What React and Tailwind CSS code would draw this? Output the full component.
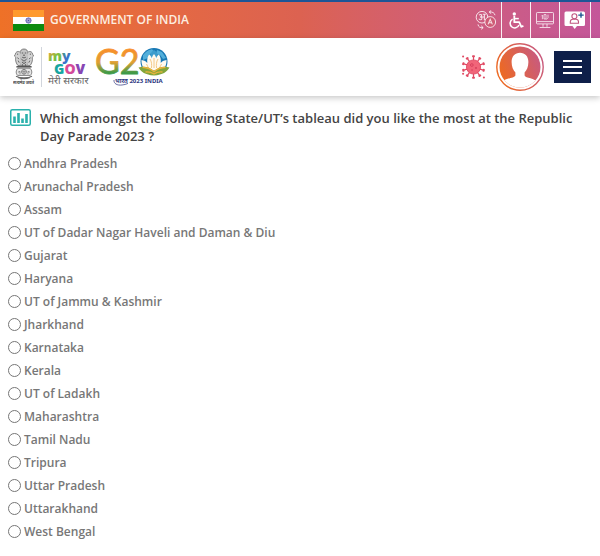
import React, { useState } from 'react';

const STATES = [
  'Andhra Pradesh',
  'Arunachal Pradesh',
  'Assam',
  'UT of Dadar Nagar Haveli and Daman & Diu',
  'Gujarat',
  'Haryana',
  'UT of Jammu & Kashmir',
  'Jharkhand',
  'Karnataka',
  'Kerala',
  'UT of Ladakh',
  'Maharashtra',
  'Tamil Nadu',
  'Tripura',
  'Uttar Pradesh',
  'Uttarakhand',
  'West Bengal',
];

const IndiaFlag = () => (
  <svg width="31" height="21" viewBox="0 0 31 21" aria-hidden="true">
    <rect width="31" height="7" fill="#ff9a2e" />
    <rect y="7" width="31" height="7" fill="#fff" />
    <rect y="14" width="31" height="7" fill="#0c8a10" />
    <circle cx="15.5" cy="10.5" r="2.6" fill="#dfe0f4" stroke="#3a3a9c" strokeWidth="0.8" />
    <path d="M15.5 8v5M13 10.5h5M13.8 8.8l3.4 3.4M17.2 8.8l-3.4 3.4" stroke="#3a3a9c" strokeWidth="0.4" />
  </svg>
);

const LanguageIcon = () => (
  <svg width="22" height="20" viewBox="0 0 22 20" fill="none" stroke="#fff" strokeOpacity="0.8" aria-hidden="true">
    <circle cx="7" cy="7.2" r="5.8" />
    <circle cx="15.2" cy="12" r="5.4" fill="#cf5b75" />
    <path d="M4 5.2c1.400-1.200 3-.6 2.600.8-.2.800-1 1-1.600 1 1.200 0 2.200.6 1.800 1.800-.4 1.200-2.200 1.200-3 0M6.800 7h2.600M9.400 4.200v5.800M7.800 4.200h3" strokeWidth="1.100" />
    <path d="M13 14.400l2.200-5 2.200 5M13.800 12.800h2.800" strokeWidth="1.100" />
    <path d="M20 5.200C19.400 2.800 17.500 1.700 14.400 2M16.200 0.400L14.200 2l2 1.700" />
    <path d="M3 14.400c.2 2.600 2.400 3.600 5 3.200M6.200 15.800l2 1.800-2 1.700" />
  </svg>
);

const WheelchairIcon = () => (
  <svg width="16" height="17" viewBox="0 0 16 17" fill="none" stroke="#fff" aria-hidden="true">
    <circle cx="6.3" cy="1.9" r="1.7" fill="#fff" stroke="none" />
    <path d="M6.3 3.8v6.4h4.9l2.2 4.6 2-.9" strokeWidth="1.8" strokeLinejoin="round" />
    <path d="M6.5 6.6h4.3" strokeWidth="1.5" />
    <path d="M4.6 7.2a4.6 4.6 0 1 0 6.4 5.8" strokeWidth="1.5" />
  </svg>
);

const MonitorIcon = () => (
  <svg width="18" height="17" viewBox="0 0 18 17" fill="none" stroke="#fff" strokeOpacity="0.75" aria-hidden="true">
    <rect x="0.5" y="0.5" width="17" height="11.4" rx="0.8" />
    <path d="M1 9.6h16M7 12v2.8M11 12v2.8M3.6 15.5h10.8" />
    <path d="M5.400 4.200l1-1v4M8 2.600h2v4.400H8zM12 2.600v3l-1.600 2" strokeWidth="0.9" />
  </svg>
);

const RegisterIcon = () => (
  <svg width="22" height="19" viewBox="0 0 22 19" aria-hidden="true">
    <path d="M2 0.5h17.5a1.5 1.5 0 0 1 1.5 1.5v11.5a1.5 1.5 0 0 1-1.5 1.5H13l-2.3 3-2.3-3H2a1.5 1.5 0 0 1-1.5-1.5V2A1.5 1.5 0 0 1 2 .5z" fill="#fff" />
    <g fill="none" stroke="#c0557f" strokeWidth="1.1">
      <circle cx="10.4" cy="5.2" r="2.5" />
      <path d="M6.3 12.2V10.6a2.6 2.6 0 0 1 2.6-2.4h3a2.6 2.6 0 0 1 2.6 2.4v1.6z" />
    </g>
    <path d="M17 1.400v5.400M14.300 4.100h5.400" stroke="#1d5590" strokeWidth="1.400" />
  </svg>
);

const Emblem = () => (
  <svg width="22" height="38" viewBox="0 0 22 38" fill="none" stroke="#666" strokeWidth="0.8" aria-hidden="true">
    <path d="M7 5.2C7 2.6 8.6 1 11 1s4 1.6 4 4.2c1.2 1.4 1 3.4.2 4.8.6 2.200.4 5.200-.6 7.600H7.400C6.400 15.200 6.200 12.200 6.800 10 6 8.600 5.800 6.600 7 5.200z" fill="#c4c4c4" />
    <path d="M6.8 4C4.600 2.800 2.600 4 2.400 6.200L1.400 8l1.400 1.400C2 12.600 3.400 15.800 5 17.600h2.400" fill="#d4d4d4" />
    <path d="M15.200 4c2.200-1.200 4.200 0 4.400 2.200L20.600 8l-1.400 1.400c.8 3.200-.6 6.400-2.200 8.200h-2.400" fill="#d4d4d4" />
    <path d="M8.800 5h1.400M11.800 5h1.400M10 7.200h2M9.200 9.200c1.200.8 2.400.8 3.600 0M8.400 11.200l2.600 2 2.600-2M9 14l2 1.600L13 14M9.400 16.200v1.400M12.600 16.200v1.400M4 6.200h1.200M16.800 6.200H18M4.600 9.600l1.200 1.600M17.400 9.600l-1.200 1.600M5.200 12.600l1 2M16.800 12.600l-1 2" stroke="#444" />
    <path d="M3.400 18.800h15.200" strokeWidth="1.400" stroke="#444" />
    <path d="M5 20.200c-2.200 2.200-2.400 5.200-.4 7.200h12.800c2-2 1.800-5-.4-7.200z" fill="#e6e6e6" />
    <circle cx="11" cy="23.800" r="2.400" fill="#f4f4f4" />
    <path d="M11 21.400v4.800M8.600 23.800h4.800M5 24.200l2-.8v3M17 24.200l-2-.8v3" strokeWidth="0.700" />
    <path d="M3 28.200c4 2.200 12 2.200 16 0M5 29.600c3.600 1.400 8.400 1.400 12 0" strokeWidth="1.100" />
    <text x="0" y="36" fontSize="4" fontWeight="700" fill="#444" stroke="none" fontFamily="Noto Sans, sans-serif">सत्यमेव जयते</text>
  </svg>
);

const MyGovLogo = () => (
  <svg className="overflow-visible" width="42" height="38" viewBox="0 0 42 38" role="img" aria-label="myGov">
    <defs>
      <linearGradient id="m" x1="0" y1="0" x2="1" y2="1">
        <stop offset="0.15" stopColor="#f0a038" />
        <stop offset="0.45" stopColor="#7cc242" />
        <stop offset="1" stopColor="#3fae55" />
      </linearGradient>
      <linearGradient id="y" x1="0" y1="0" x2="1" y2="1">
        <stop offset="0.3" stopColor="#56b947" />
        <stop offset="0.7" stopColor="#3a74c8" />
      </linearGradient>
      <linearGradient id="o" x1="0" x2="1">
        <stop offset="0" stopColor="#e5518c" />
        <stop offset="1" stopColor="#c643a4" />
      </linearGradient>
    </defs>
    <g fontFamily="Open Sans, sans-serif" fontWeight="800">
      <text x="0" y="13" fontSize="14">
        <tspan fill="url(#m)">m</tspan>
        <tspan fill="url(#y)">y</tspan>
      </text>
      <text x="6" y="26" fontSize="14">
        <tspan fill="#17a6a0">G</tspan>
        <tspan fill="url(#o)">O</tspan>
        <tspan fill="#8746b4">V</tspan>
      </text>
    </g>
    <text x="0" y="36" fontSize="10" fill="#666" fontFamily="Noto Sans, sans-serif">मेरी सरकार</text>
  </svg>
);

const G20Logo = () => (
  <svg className="overflow-visible" width="76" height="40" viewBox="0 0 76 40" role="img" aria-label="G20 India">
    <defs>
      <linearGradient id="g20" x1="0" y1="0" x2="0" y2="1">
        <stop offset="0.25" stopColor="#f7902c" />
        <stop offset="0.55" stopColor="#dda032" />
        <stop offset="0.8" stopColor="#3f9a48" />
      </linearGradient>
      <clipPath id="globe">
        <circle cx="58" cy="15" r="13" />
      </clipPath>
    </defs>
    <text x="-1" y="27" fontSize="34" fill="url(#g20)" stroke="url(#g20)" strokeWidth="0.8" fontFamily="Lato, sans-serif">G2</text>
    <circle cx="58" cy="14.500" r="13.500" fill="#1878b4" />
    <g clipPath="url(#globe)">
      <path d="M47 8c3-4 6-6 9-6l2 3-4 2-2 4-5 2zM61 3l5 2 4 6-3 1-3-4-4-1z" fill="#51aeda" />
      <path d="M58 3c3 2 4.400 4.600 4 8h-8c-.4-3.400 1-6 4-8z" fill="#3c9ccc" />
    </g>
    <path d="M45.500 13c3 .4 4.600 1.400 5.800 3-.4-3.400.2-6 1.800-8.400 1.400 1 2.200 2.200 2.600 3.600.6-1.800 1.300-3 2.300-4.200 1 1.200 1.700 2.400 2.300 4.200.4-1.400 1.200-2.600 2.600-3.600 1.600 2.400 2.200 5 1.800 8.400 1.200-1.600 2.800-2.600 5.800-3 .2 4.600-1.600 8.600-4.500 10.500H50C47.100 21.600 45.300 17.600 45.500 13z" fill="#fffaf0" />
    <path d="M54 12c1.600 2.400 2 6 1.400 9M62 12c-1.600 2.400-2 6-1.400 9M58 11v10M50.500 17l2 4M65.500 17l-2 4" fill="none" stroke="#f3c47c" strokeWidth="0.900" />
    <path d="M42.500 20.500c5.500-1.600 10.500-.6 15.500 3.600 5-4.200 10-5.200 15.500-3.600-2.600 4.500-6.500 7.300-15.500 8C49 27.800 45.100 25 42.500 20.500z" fill="#82a53a" />
    <path d="M46.500 20.200c4.500.2 8.500 1.800 11.500 4.600 3-2.800 7-4.400 11.500-4.600M49.500 25c3.500-.4 5.900.2 8.500 2 2.600-1.800 5-2.400 8.500-2" fill="none" stroke="#e9b23c" strokeWidth="1.400" />
    <text x="19" y="36" fontSize="6" fontWeight="700" fill="#2c3580" fontFamily="Noto Sans, sans-serif">भारत 2023 INDIA</text>
    <path d="M18 33c-.4 3.600 3 5.600 8 5 2.400-.2 4.400-.8 6-1.600" stroke="#2c3580" strokeWidth="0.700" fill="none" />
  </svg>
);

const SPIKES = [0, 36, 72, 108, 144, 180, 216, 252, 288, 324];

const VirusIcon = () => (
  <svg width="25" height="26" viewBox="0 0 24 25" aria-hidden="true">
    <g stroke="#e04a63" fill="#e04a63">
      {SPIKES.map((angle) => (
        <g key={angle} transform={`rotate(${angle} 12 12.5)`}>
          <path d="M12 6V2.600" strokeWidth="1.200" />
          <rect x="10.600" y="1.200" width="2.800" height="2" rx="0.800" stroke="none" />
        </g>
      ))}
      <circle cx="2" cy="2.400" r="1" stroke="none" />
      <circle cx="2" cy="19" r="1" stroke="none" />
      <circle cx="22" cy="22.600" r="1" stroke="none" />
    </g>
    <circle cx="12" cy="12.500" r="6.800" fill="#f16579" stroke="#dd4560" strokeWidth="0.800" />
    <circle cx="10.400" cy="10.600" r="1.300" fill="none" stroke="#d23a58" strokeWidth="0.800" />
    <circle cx="14.400" cy="13.400" r="0.900" fill="#d23a58" />
    <circle cx="10.600" cy="15.400" r="0.700" fill="#d23a58" />
  </svg>
);

const Avatar = () => (
  <svg width="48" height="48" viewBox="0 0 48 48" aria-hidden="true">
    <defs>
      <linearGradient id="avatar" x1="0" y1="0.700" x2="1" y2="0.300">
        <stop offset="0" stopColor="#ee6a1f" />
        <stop offset="1" stopColor="#c85a80" />
      </linearGradient>
      <clipPath id="disc">
        <circle cx="24" cy="24" r="20.500" />
      </clipPath>
    </defs>
    <circle cx="24" cy="24" r="23.200" fill="none" stroke="url(#avatar)" strokeWidth="1.400" />
    <circle cx="24" cy="24" r="20.500" fill="url(#avatar)" />
    <g clipPath="url(#disc)" fill="#fff">
      <path d="M24 9.800c5 0 8.400 3.600 8.400 9.200 0 4.600-1.600 8.400-3.800 10.400v3c1 3 10.400 2.200 13.400 7.200v9H6v-9c3-5 12.400-4.200 13.400-7.200v-3c-2.200-2-3.800-5.800-3.800-10.400 0-5.600 3.400-9.200 8.400-9.200z" />
    </g>
  </svg>
);

const PollIcon = () => (
  <svg className="shrink-0" width="21" height="17" viewBox="0 0 21 17" fill="none" stroke="#2ab1ac" aria-hidden="true">
    <rect x="0.750" y="0.750" width="19.500" height="15.500" rx="1.500" strokeWidth="1.500" />
    <path d="M4.500 14V7.500M8.500 14V4M12.500 14V9.500M16.500 14V5" strokeWidth="2.600" />
  </svg>
);

const TOOLS = [
  { label: 'Change language', Icon: LanguageIcon },
  { label: 'Accessibility', Icon: WheelchairIcon },
  { label: 'Screen reader', Icon: MonitorIcon },
  { label: 'Register', Icon: RegisterIcon },
];

const App = () => {
  const [choice, setChoice] = useState('');

  return (
    <div className="min-h-screen bg-white font-['Open_Sans',sans-serif]">
      <div className="flex h-[38px] items-stretch justify-between border-t-2 border-[#1d5596] bg-linear-to-r from-[#ee7127] via-[#dc6251] to-[#c4579a] pr-[9px] pl-[13px]">
        <a href="#india" className="flex items-center gap-[6px] text-xs font-semibold text-[#fdeee0]">
          <IndiaFlag />
          GOVERNMENT OF INDIA
        </a>
        <div className="flex">
          {TOOLS.map(({ label, Icon }) => (
            <button
              key={label}
              type="button"
              aria-label={label}
              className="flex min-w-[29px] items-center justify-center border-r border-white/90 px-1"
            >
              <Icon />
            </button>
          ))}
        </div>
      </div>

      <header className="flex h-[58px] items-center justify-between pr-[9px] pl-[13px] shadow-[0_2px_6px_rgba(0,0,0,0.22)]">
        <a href="#home" className="flex items-center gap-[6px]">
          <Emblem />
          <span className="flex h-10 items-center border-l border-gray-300 pl-[6px]">
            <MyGovLogo />
          </span>
          <G20Logo />
        </a>
        <div className="flex items-center gap-[10px]">
          <a href="#covid" aria-label="COVID-19">
            <VirusIcon />
          </a>
          <button type="button" aria-label="Account">
            <Avatar />
          </button>
          <button
            type="button"
            aria-label="Menu"
            className="flex h-8 w-[37px] flex-col items-center justify-center gap-1 bg-[#0e1f49]"
          >
            <span className="h-[2px] w-[19px] bg-white" />
            <span className="h-[2px] w-[19px] bg-white" />
            <span className="h-[2px] w-[19px] bg-white" />
          </button>
        </div>
      </header>

      <main className="px-2 pt-[13px] pb-3">
        <fieldset>
          <legend className="flex gap-[9px] pl-[2px] text-[13px] leading-[18px] font-semibold text-[#444]">
            <PollIcon />
            <span>
              Which amongst the following State/UT’s tableau did you like the most at the Republic Day Parade 2023 ?
            </span>
          </legend>
          <div className="pt-[7px]">
            {STATES.map((state) => (
              <label key={state} className="flex h-[23px] items-center gap-[3px] text-xs font-semibold text-[#777]">
                <input
                  type="radio"
                  name="tableau"
                  value={state}
                  checked={choice === state}
                  onChange={() => setChoice(state)}
                  className="size-[13px]"
                />
                {state}
              </label>
            ))}
          </div>
        </fieldset>
      </main>
    </div>
  );
};

export default App;
